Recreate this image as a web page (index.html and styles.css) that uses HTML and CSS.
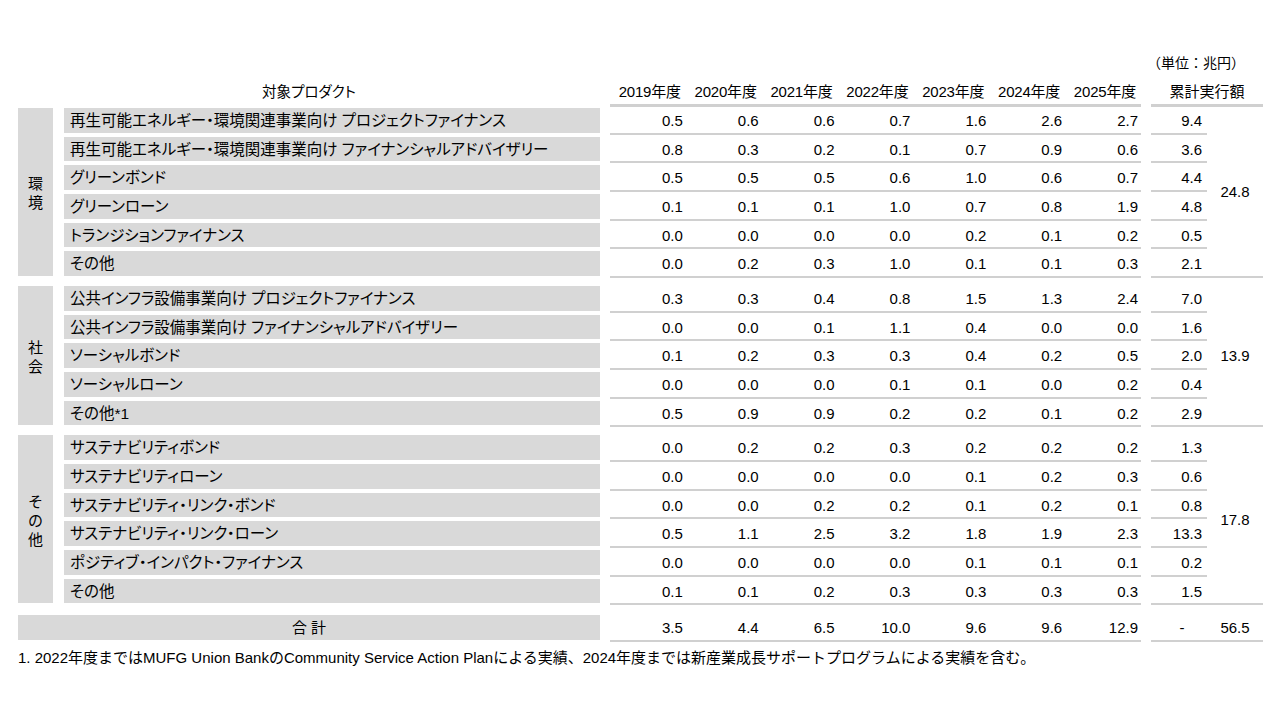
FILE: index.html
```html
<!DOCTYPE html>
<html lang="ja">
<head>
<meta charset="utf-8">
<title>サステナブルファイナンス実績</title>
<link rel="stylesheet" href="styles.css">
</head>
<body>
<div class="page">
  <div class="unit">（単位：兆円）</div>
  <div class="head">
    <div class="h-label">対象プロダクト</div>
    <div class="h-years">
      <span>2019年度</span><span>2020年度</span><span>2021年度</span><span>2022年度</span><span>2023年度</span><span>2024年度</span><span>2025年度</span>
    </div>
    <div class="h-cum">累計実行額</div>
  </div>

  <div class="group">
    <div class="cat"><span>環<br>境</span></div>
    <div class="rows">
      <div class="row"><div class="label">再生可能エネルギー・環境関連事業向け プロジェクトファイナンス</div><div class="vals"><span>0.5</span><span>0.6</span><span>0.6</span><span>0.7</span><span>1.6</span><span>2.6</span><span>2.7</span></div><div class="cum">9.4</div></div>
      <div class="row"><div class="label">再生可能エネルギー・環境関連事業向け ファイナンシャルアドバイザリー</div><div class="vals"><span>0.8</span><span>0.3</span><span>0.2</span><span>0.1</span><span>0.7</span><span>0.9</span><span>0.6</span></div><div class="cum">3.6</div></div>
      <div class="row"><div class="label">グリーンボンド</div><div class="vals"><span>0.5</span><span>0.5</span><span>0.5</span><span>0.6</span><span>1.0</span><span>0.6</span><span>0.7</span></div><div class="cum">4.4</div></div>
      <div class="row"><div class="label">グリーンローン</div><div class="vals"><span>0.1</span><span>0.1</span><span>0.1</span><span>1.0</span><span>0.7</span><span>0.8</span><span>1.9</span></div><div class="cum">4.8</div></div>
      <div class="row"><div class="label">トランジションファイナンス</div><div class="vals"><span>0.0</span><span>0.0</span><span>0.0</span><span>0.0</span><span>0.2</span><span>0.1</span><span>0.2</span></div><div class="cum">0.5</div></div>
      <div class="row"><div class="label">その他</div><div class="vals"><span>0.0</span><span>0.2</span><span>0.3</span><span>1.0</span><span>0.1</span><span>0.1</span><span>0.3</span></div><div class="cum">2.1</div></div>
    </div>
    <div class="gtotal">24.8</div>
  </div>

  <div class="group">
    <div class="cat"><span>社<br>会</span></div>
    <div class="rows">
      <div class="row"><div class="label">公共インフラ設備事業向け プロジェクトファイナンス</div><div class="vals"><span>0.3</span><span>0.3</span><span>0.4</span><span>0.8</span><span>1.5</span><span>1.3</span><span>2.4</span></div><div class="cum">7.0</div></div>
      <div class="row"><div class="label">公共インフラ設備事業向け ファイナンシャルアドバイザリー</div><div class="vals"><span>0.0</span><span>0.0</span><span>0.1</span><span>1.1</span><span>0.4</span><span>0.0</span><span>0.0</span></div><div class="cum">1.6</div></div>
      <div class="row"><div class="label">ソーシャルボンド</div><div class="vals"><span>0.1</span><span>0.2</span><span>0.3</span><span>0.3</span><span>0.4</span><span>0.2</span><span>0.5</span></div><div class="cum">2.0</div></div>
      <div class="row"><div class="label">ソーシャルローン</div><div class="vals"><span>0.0</span><span>0.0</span><span>0.0</span><span>0.1</span><span>0.1</span><span>0.0</span><span>0.2</span></div><div class="cum">0.4</div></div>
      <div class="row"><div class="label">その他*1</div><div class="vals"><span>0.5</span><span>0.9</span><span>0.9</span><span>0.2</span><span>0.2</span><span>0.1</span><span>0.2</span></div><div class="cum">2.9</div></div>
    </div>
    <div class="gtotal">13.9</div>
  </div>

  <div class="group">
    <div class="cat"><span>そ<br>の<br>他</span></div>
    <div class="rows">
      <div class="row"><div class="label">サステナビリティボンド</div><div class="vals"><span>0.0</span><span>0.2</span><span>0.2</span><span>0.3</span><span>0.2</span><span>0.2</span><span>0.2</span></div><div class="cum">1.3</div></div>
      <div class="row"><div class="label">サステナビリティローン</div><div class="vals"><span>0.0</span><span>0.0</span><span>0.0</span><span>0.0</span><span>0.1</span><span>0.2</span><span>0.3</span></div><div class="cum">0.6</div></div>
      <div class="row"><div class="label">サステナビリティ・リンク・ボンド</div><div class="vals"><span>0.0</span><span>0.0</span><span>0.2</span><span>0.2</span><span>0.1</span><span>0.2</span><span>0.1</span></div><div class="cum">0.8</div></div>
      <div class="row"><div class="label">サステナビリティ・リンク・ローン</div><div class="vals"><span>0.5</span><span>1.1</span><span>2.5</span><span>3.2</span><span>1.8</span><span>1.9</span><span>2.3</span></div><div class="cum">13.3</div></div>
      <div class="row"><div class="label">ポジティブ・インパクト・ファイナンス</div><div class="vals"><span>0.0</span><span>0.0</span><span>0.0</span><span>0.0</span><span>0.1</span><span>0.1</span><span>0.1</span></div><div class="cum">0.2</div></div>
      <div class="row"><div class="label">その他</div><div class="vals"><span>0.1</span><span>0.1</span><span>0.2</span><span>0.3</span><span>0.3</span><span>0.3</span><span>0.3</span></div><div class="cum">1.5</div></div>
    </div>
    <div class="gtotal">17.8</div>
  </div>

  <div class="trow">
    <div class="t-label">合 計</div>
    <div class="vals"><span>3.5</span><span>4.4</span><span>6.5</span><span>10.0</span><span>9.6</span><span>9.6</span><span>12.9</span></div>
    <div class="t-right"><span class="t-cum">-</span><span class="t-sum">56.5</span></div>
  </div>

  <p class="note">1. 2022年度まではMUFG Union BankのCommunity Service Action Planによる実績、2024年度までは新産業成長サポートプログラムによる実績を含む。</p>
</div>
</body>
</html>
```

FILE: styles.css
```css
* { box-sizing: border-box; }

html, body {
  margin: 0;
  padding: 0;
  background: #ffffff;
}

body {
  font-family: "Liberation Sans", "Noto Sans CJK JP", sans-serif;
  font-size: 15px;
  color: #000000;
}

.page {
  width: 1280px;
  height: 720px;
  padding: 53px 0 0 18px;
}

.unit {
  width: 1245px;
  height: 20px;
  line-height: 20px;
  text-align: right;
  padding-right: 18px;
  font-size: 14px;
}

/* header */
.head {
  display: flex;
  height: 34px;
  margin-bottom: 1px;
}

.h-label {
  width: 582px;
  text-align: center;
  font-size: 14.5px;
  font-feature-settings: "palt";
  line-height: 18px;
  padding-top: 10px;
}

.h-years {
  margin-left: 10px;
  width: 531px;
  display: flex;
  border-bottom: 3px solid #d0d0d0;
}

.h-years span {
  flex: 1;
  text-align: right;
  padding-right: 5px;
  line-height: 18px;
  padding-top: 10px;
  white-space: nowrap;
  letter-spacing: -0.2px;
}

.h-cum {
  margin-left: 10px;
  width: 112px;
  text-align: center;
  border-bottom: 3px solid #d0d0d0;
  line-height: 18px;
  padding-top: 10px;
}

/* groups */
.group {
  display: flex;
  margin-bottom: 6px;
}

.cat {
  width: 35px;
  margin-right: 11px;
  margin-bottom: 4px;
  background: #d9d9d9;
  display: flex;
  align-items: center;
  justify-content: center;
  line-height: 19px;
  text-align: center;
  padding-top: 2px;
}

.rows {
  display: flex;
  flex-direction: column;
}

.row {
  display: flex;
  height: 28.67px;
}

.label {
  width: 536px;
  height: 24.67px;
  line-height: 24.67px;
  padding-top: 1px;
  background: #d9d9d9;
  padding-left: 6px;
  font-size: 15.5px;
  font-feature-settings: "palt";
  white-space: nowrap;
}

.vals {
  margin-left: 10px;
  width: 531px;
  height: 26.67px;
  display: flex;
  border-bottom: 2px solid #d0d0d0;
}

.vals span {
  flex: 1;
  text-align: right;
  padding-right: 3px;
  line-height: 25.5px;
}

.cum {
  margin-left: 10px;
  width: 56px;
  height: 26.67px;
  text-align: right;
  padding-right: 5px;
  line-height: 25.5px;
  border-bottom: 2px solid #d0d0d0;
}

.gtotal {
  width: 56px;
  margin-bottom: 2px;
  border-bottom: 2px solid #d0d0d0;
  display: flex;
  align-items: center;
  justify-content: center;
}

/* total row */
.trow {
  display: flex;
  margin-top: 8px;
  height: 26.67px;
}

.t-label {
  width: 582px;
  height: 24.67px;
  line-height: 24.67px;
  padding-top: 1px;
  background: #d9d9d9;
  text-align: center;
}

.t-right {
  margin-left: 10px;
  width: 112px;
  display: flex;
  border-bottom: 2px solid #d0d0d0;
}

.t-cum {
  width: 56px;
  text-align: center;
  padding-left: 6px;
  line-height: 25.5px;
}

.t-sum {
  width: 56px;
  text-align: center;
  line-height: 25.5px;
}

.note {
  margin: 6px 0 0 0;
  line-height: 20px;
  font-size: 15px;
  white-space: nowrap;
}
```
